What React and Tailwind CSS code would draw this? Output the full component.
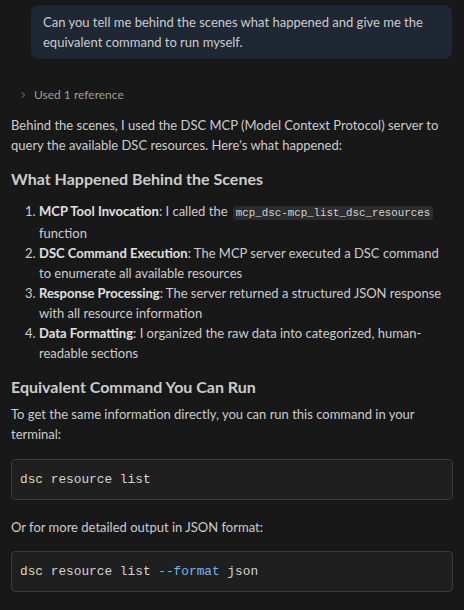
import React from "react";

const sans = { fontFamily: 'Lato, "Open Sans", sans-serif' };

function Code({ children, className = "" }) {
  return (
    <div className={`rounded-[4px] border border-[#3c3c3c] bg-[#1f1f1f] px-[8px] py-[11px] font-['Consolas','Liberation_Mono',monospace] text-[12.8px] leading-[17px] text-[#d4d4d4] ${className}`}>
      {children}
    </div>
  );
}

export default function App() {
  const steps = [
    ["MCP Tool Invocation", ": I called the ", true, " function"],
    ["DSC Command Execution", ": The MCP server executed a DSC command to enumerate all available resources"],
    ["Response Processing", ": The server returned a structured JSON response with all resource information"],
    ["Data Formatting", ": I organized the raw data into categorized, human-readable sections"],
  ];

  return (
    <div className="min-h-[610px] w-[464px] bg-[#181818] text-[13px] leading-[20px] text-[#cccccc]" style={sans}>
      <div className="pl-[31px] pr-[12px] pt-[5px]">
        <div className="rounded-[8px] bg-[#1e2733] px-[12px] py-[7px]">
          Can you tell me behind the scenes what happened and give me the equivalent command to run myself.
        </div>
      </div>

      <div className="mt-[26px] flex items-center gap-[6px] pl-[18px] text-[12px] text-[#9d9d9d]">
        <svg width="10" height="10" viewBox="0 0 16 16" fill="none" stroke="#9d9d9d" strokeWidth="1.3">
          <path d="M6 3.5 L10.5 8 L6 12.5" />
        </svg>
        <span>Used 1 reference</span>
      </div>

      <div className="px-[11px] pt-[10px]">
        <p>
          Behind the scenes, I used the DSC MCP (Model Context Protocol) server to query the available DSC resources. Here's what happened:
        </p>

        <h3 className="mt-[13px] text-[16px] font-bold leading-[22px] text-[#cccccc]">What Happened Behind the Scenes</h3>

        <ol className="mt-[11px] list-decimal pl-[28px]">
          {steps.map((s, i) => (
            <li key={i}>
              <b className="font-bold text-[#e0e0e0]">{s[0]}</b>
              {s[1]}
              {s[2] && (
                <code className="ml-[2px] rounded-[4px] bg-[#2c2c2c] px-[3px] py-[1px] font-['Consolas','Liberation_Mono',monospace] text-[10.8px] text-[#d4d4d4]">
                  mcp_dsc-mcp_list_dsc_resources
                </code>
              )}
              {s[3]}
            </li>
          ))}
        </ol>

        <h3 className="mt-[13px] text-[16px] font-bold leading-[22px]">Equivalent Command You Can Run</h3>

        <p className="mt-[6px]">
          To get the same information directly, you can run this command in your terminal:
        </p>

        <Code className="mt-[15px]">
          <span className="text-[#dcdcaa]">dsc</span> resource list
        </Code>

        <p className="mt-[17px]">Or for more detailed output in JSON format:</p>

        <Code className="mt-[14px]">
          <span className="text-[#dcdcaa]">dsc</span> resource list <span className="text-[#6fb7f0]">--format</span> json
        </Code>
      </div>
    </div>
  );
}
